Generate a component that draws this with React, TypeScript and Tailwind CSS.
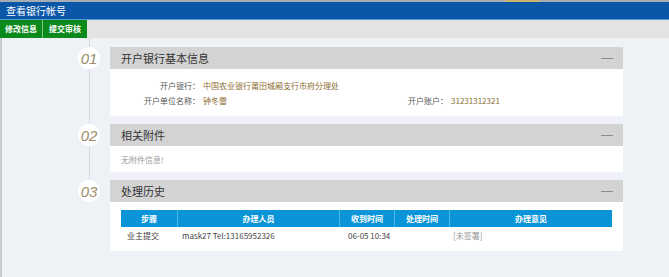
import React from "react";

const font = { fontFamily: '"Noto Sans CJK SC", "Liberation Sans", sans-serif' };

function Circle({ n }: { n: string }) {
  return (
    <div className="absolute left-[-32px] top-0 w-[22px] h-[22px] rounded-full bg-white flex items-center justify-center">
      <span
        className="italic text-[15px] leading-none text-[#9c8c6c]"
        style={{ fontFamily: '"Liberation Sans", Arial, sans-serif' }}
      >
        {n}
      </span>
    </div>
  );
}

function Header({ title }: { title: string }) {
  return (
    <div className="h-[22px] bg-[#d3d3d3] flex items-center justify-between pl-[11px] pr-[10px]">
      <span className="text-[11px] text-[#333]">{title}</span>
      <span className="block w-[12px] h-px bg-[#8a8a8a]" />
    </div>
  );
}

export default function App() {
  return (
    <div className="w-[669px] h-[277px] bg-[#eef2f7] overflow-hidden" style={font}>
      <div className="h-[2px] bg-[#a4acb4] flex">
        <div className="ml-[505px] w-[35px] bg-[#c8b46a]" />
      </div>
      <div className="h-[17px] bg-[#0a57a8] flex items-center pl-[6px]">
        <span className="text-[10px] leading-none text-white">查看银行帐号</span>
      </div>
      <div className="h-px bg-[#5b9ad6]" />
      <div className="h-[18px] bg-[#e3e3e3] flex">
        <div className="w-[43px] bg-[#0b8a1c] flex items-center justify-center text-white text-[8px] font-bold border-r border-[#7fc48a]">
          修改信息
        </div>
        <div className="w-[44px] bg-[#0b8a1c] flex items-center justify-center text-white text-[8px] font-bold">
          提交审核
        </div>
      </div>
      <div className="relative border-l-2 border-[#c9cdd2] h-[239px]">
        <div className="absolute left-[87px] top-0 h-[150px] w-px bg-[#d6dade]" />
        <div className="relative pl-[108px] pt-[9px] w-[621px] flex flex-col gap-[8px]">
          <div className="relative">
            <Circle n="01" />
            <Header title="开户银行基本信息" />
            <div className="bg-white h-[47px] pt-[9px] text-[8px]">
              <div className="flex h-[15px] items-center">
                <span className="w-[90px] text-right text-[#555]">开户银行：</span>
                <span className="ml-[3px] text-[#8c6c32]">中国农业银行莆田城厢支行市府分理处</span>
              </div>
              <div className="flex h-[15px] items-center">
                <span className="w-[90px] text-right text-[#555]">开户单位名称：</span>
                <span className="ml-[3px] w-[205px] text-[#8c6c32]">钟冬雷</span>
                <span className="text-[#555]">开户账户：</span>
                <span className="ml-[3px] text-[#8c6c32]">31231312321</span>
              </div>
            </div>
          </div>
          <div className="relative">
            <Circle n="02" />
            <Header title="相关附件" />
            <div className="bg-white h-[26px] pt-[6px] pl-[11px] text-[8px] leading-[15px] text-[#999]">
              无附件信息!
            </div>
          </div>
          <div className="relative">
            <Circle n="03" />
            <Header title="处理历史" />
            <div className="bg-white h-[49px] pt-[8px] pl-[11px] pr-[11px]">
              <div className="text-[8px]">
                <div className="flex h-[17px] bg-[#0a94d8] text-white font-bold">
                  <div className="w-[57px] flex items-center justify-center border-r border-[#4fb4e6]">步骤</div>
                  <div className="w-[162px] flex items-center justify-center border-r border-[#4fb4e6]">办理人员</div>
                  <div className="w-[55px] flex items-center justify-center border-r border-[#4fb4e6]">收到时间</div>
                  <div className="w-[55px] flex items-center justify-center border-r border-[#4fb4e6]">处理时间</div>
                  <div className="flex-1 flex items-center justify-center">办理意见</div>
                </div>
                <div className="flex h-[18px] items-center text-[#444]">
                  <div className="w-[57px] pl-[6px]">业主提交</div>
                  <div className="w-[162px] pl-[4px]">mask27 Tel:13165952326</div>
                  <div className="w-[55px] pl-[8px]">06-05 10:34</div>
                  <div className="w-[55px]" />
                  <div className="flex-1 pl-[3px] text-[#999]">[未签署]</div>
                </div>
              </div>
            </div>
          </div>
        </div>
      </div>
    </div>
  );
}
